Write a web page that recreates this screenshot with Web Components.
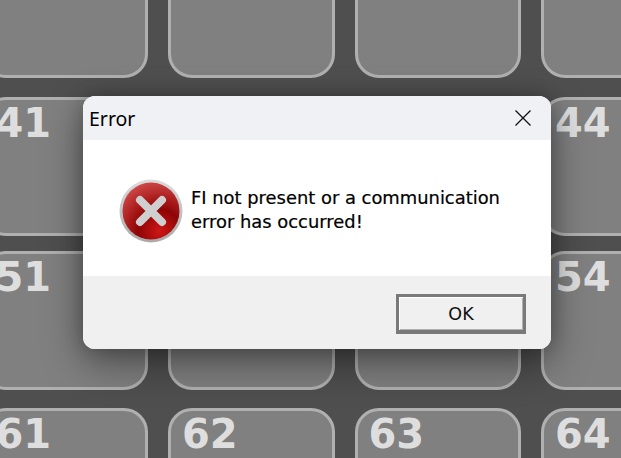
<!DOCTYPE html>
<html>
<head>
<meta charset="utf-8">
<title>Error</title>
<style>
  html, body { margin: 0; height: 100%; overflow: hidden; background: #4f4f4f; }
</style>
</head>
<body>
<tile-board>
  <pad-tile></pad-tile><pad-tile></pad-tile><pad-tile></pad-tile><pad-tile></pad-tile>
  <pad-tile num="41"></pad-tile><pad-tile></pad-tile><pad-tile></pad-tile><pad-tile num="44"></pad-tile>
  <pad-tile num="51"></pad-tile><pad-tile></pad-tile><pad-tile></pad-tile><pad-tile num="54"></pad-tile>
  <pad-tile num="61"></pad-tile><pad-tile num="62"></pad-tile><pad-tile num="63"></pad-tile><pad-tile num="64"></pad-tile>
</tile-board>
<error-dialog heading="Error">
  FI not present or a communication<br>error has occurred!
</error-dialog>

<script>
class TileBoard extends HTMLElement {
  constructor() {
    super();
    this.attachShadow({ mode: 'open' });
  }

  connectedCallback() {
    this.shadowRoot.innerHTML = `
      <style>
        :host {
          display: grid;
          grid-template-columns: repeat(4, 166.5px);
          grid-template-rows: 139px 158px 154px 157px;
          column-gap: 20px;
          align-items: end;
          margin: -61px 0 0 -18.5px;
          width: 760px;
        }
      </style>
      <slot></slot>`;
  }
}

class PadTile extends HTMLElement {
  constructor() {
    super();
    this.attachShadow({ mode: 'open' });
  }

  connectedCallback() {
    const num = this.getAttribute('num') || '';
    this.shadowRoot.innerHTML = `
      <style>
        :host {
          display: block;
          box-sizing: border-box;
          height: 139px;
          border: 3px solid #b0b0b0;
          border-radius: 24px;
          background: #808080;
          padding: 0 0 0 11px;
          overflow: hidden;
        }
        span {
          display: block;
          font: bold 40px/47px "DejaVu Sans", sans-serif;
          color: #dedede;
        }
      </style>
      <span>${num}</span>`;
  }
}

class ErrorIcon extends HTMLElement {
  constructor() {
    super();
    this.attachShadow({ mode: 'open' });
  }

  connectedCallback() {
    this.shadowRoot.innerHTML = `
      <style>
        :host { display: block; width: 64px; height: 64px; flex: none; }
        svg { display: block; }
      </style>
      <svg width="64" height="64" viewBox="0 0 64 64">
        <defs>
          <linearGradient id="ring" x1="0" y1="0" x2="0" y2="1">
            <stop offset="0" stop-color="#dcdcdc"/>
            <stop offset="1" stop-color="#a9a9a9"/>
          </linearGradient>
          <radialGradient id="red" cx="0.65" cy="0.85" r="0.9">
            <stop offset="0" stop-color="#cf1616"/>
            <stop offset="0.42" stop-color="#8e0505"/>
            <stop offset="0.62" stop-color="#a81a1a"/>
            <stop offset="1" stop-color="#d04a4a"/>
          </radialGradient>
        </defs>
        <circle cx="32" cy="32" r="31.5" fill="url(#ring)"/>
        <circle cx="32" cy="32" r="28.5" fill="url(#red)"/>
        <path d="M21 21 L43 43 M43 21 L21 43" stroke="#cfcfcf" stroke-width="8" stroke-linecap="round" fill="none"/>
      </svg>`;
  }
}

class ErrorDialog extends HTMLElement {
  constructor() {
    super();
    this.attachShadow({ mode: 'open' });
  }

  connectedCallback() {
    const heading = this.getAttribute('heading') || '';
    this.shadowRoot.innerHTML = `
      <style>
        :host {
          position: absolute;
          left: 83px;
          top: 96px;
          width: 468px;
          height: 253px;
          display: flex;
          flex-direction: column;
          border-radius: 12px;
          overflow: hidden;
          background: #fff;
          box-shadow: 0 14px 40px rgba(0, 0, 0, .42), 0 0 18px rgba(0, 0, 0, .22);
          font-family: "DejaVu Sans", sans-serif;
          color: #000;
        }
        .title {
          height: 44px;
          background: #f0f1f4;
          display: flex;
          align-items: center;
          justify-content: space-between;
          padding: 0 20px 0 6px;
          font: 19.5px "Noto Sans", sans-serif;
          color: #000;
        }
        .title svg { display: block; }
        .body {
          height: 136px;
          display: flex;
          align-items: flex-start;
          gap: 8px;
          padding: 40px 0 0 36px;
          box-sizing: border-box;
          font-size: 17.9px;
          line-height: 24px;
          -webkit-text-stroke: .2px #000;
        }
        .text { padding-top: 6px; }
        error-icon { margin-top: -1px; }
        .foot {
          flex: 1;
          background: #f0f0f0;
          display: flex;
          justify-content: flex-end;
          align-items: flex-start;
          padding: 18px 25px 0 0;
        }
        button {
          width: 130px;
          height: 40px;
          box-sizing: border-box;
          background: #f0f0f0;
          border: 3px solid #7a7a7a;
          border-bottom-width: 4px;
          box-shadow: inset 1px 1px 0 #fff, inset -1px -1px 0 #b0b0b0;
          font: 17.5px "DejaVu Sans", sans-serif;
          color: #111;
          padding: 0;
        }
      </style>
      <div class="title">
        <span>${heading}</span>
        <svg width="16" height="16" viewBox="0 0 16 16"><path d="M.5.5 15.5 15.5M15.5.5.5 15.5" stroke="#111" stroke-width="1.3" fill="none"/></svg>
      </div>
      <div class="body">
        <error-icon></error-icon>
        <div class="text"><slot></slot></div>
      </div>
      <div class="foot"><button>OK</button></div>`;
  }
}

customElements.define('tile-board', TileBoard);
customElements.define('pad-tile', PadTile);
customElements.define('error-icon', ErrorIcon);
customElements.define('error-dialog', ErrorDialog);
</script>
</body>
</html>
